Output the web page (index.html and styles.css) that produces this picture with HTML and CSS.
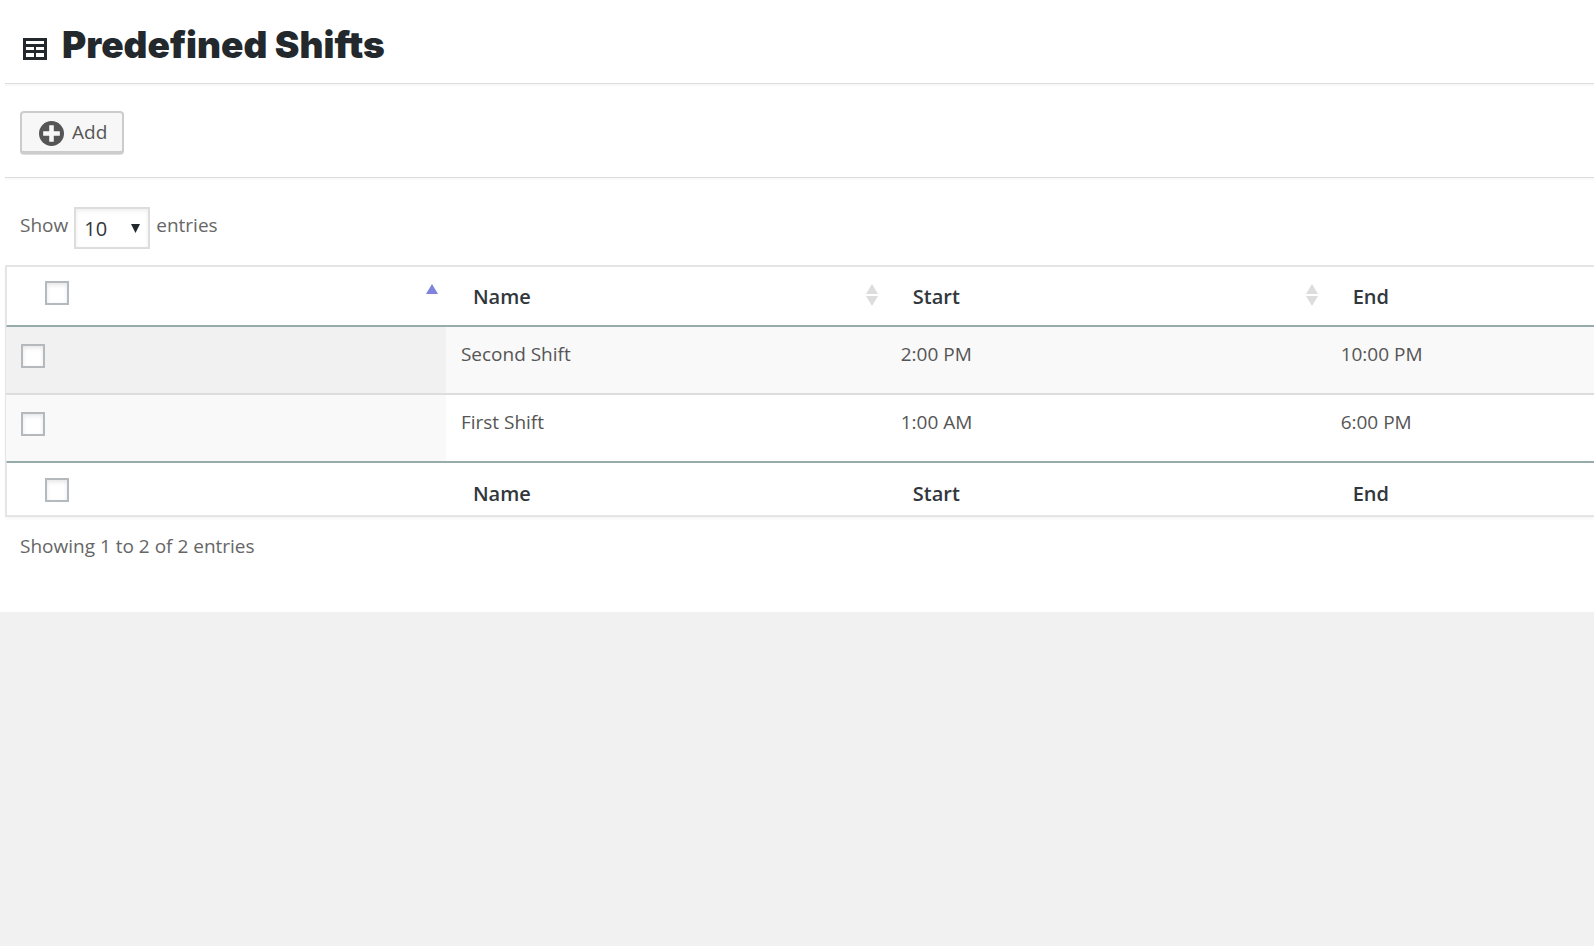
FILE: index.html
```html
<!DOCTYPE html>
<html lang="en">
<head>
<meta charset="utf-8">
<title>Predefined Shifts</title>
<link rel="stylesheet" href="styles.css">
</head>
<body>
<main class="panel">
  <header class="panel-header">
    <svg class="title-icon" viewBox="0 0 24 22" aria-hidden="true"><path fill="currentColor" fill-rule="evenodd" d="M0 0h24v22H0zM3 3v3h18V3zM3 9v3h8V9zM13 9v3h8V9zM3 15v4h8v-4zM13 15v4h8v-4z"/></svg>
    <h1 class="title">Predefined Shifts</h1>
  </header>
  <div class="toolbar">
    <button class="add-button" type="button">
      <svg class="add-icon" viewBox="0 0 24 24" aria-hidden="true"><circle cx="12" cy="12" r="12" fill="currentColor"/><path fill="#f7f7f7" d="M9.800 4h4.400v5.800H20v4.400h-5.800V20H9.800v-5.800H4V9.800h5.800z"/></svg>
      <span>Add</span>
    </button>
  </div>
  <div class="length">
    <label for="length">Show</label>
    <span class="select-wrap">
      <select class="select" id="length"><option>10</option><option>25</option><option>50</option></select>
      <svg class="select-arrow" viewBox="0 0 9 9" aria-hidden="true"><path fill="#23282d" d="M0 0h9L4.500 9z"/></svg>
    </span>
    <span>entries</span>
  </div>
  <div class="table-wrap">
    <table class="table">
      <colgroup><col class="col"><col class="col"><col class="col"><col></colgroup>
      <thead>
        <tr>
          <th><div class="head"><input class="check" type="checkbox" aria-label="Select all"><svg class="sort sort-active" viewBox="0 0 12 22" aria-hidden="true"><path d="M6 0l6 10H0z"/></svg></div></th>
          <th><div class="head"><button class="sort-button" type="button">Name</button><svg class="sort" viewBox="0 0 12 22" aria-hidden="true"><path d="M6 0l6 10H0zM0 12h12L6 22z"/></svg></div></th>
          <th><div class="head"><button class="sort-button" type="button">Start</button><svg class="sort" viewBox="0 0 12 22" aria-hidden="true"><path d="M6 0l6 10H0zM0 12h12L6 22z"/></svg></div></th>
          <th><div class="head"><button class="sort-button" type="button">End</button></div></th>
        </tr>
      </thead>
      <tbody>
        <tr><td><input class="check" type="checkbox" aria-label="Select Second Shift"></td><td>Second Shift</td><td>2:00 PM</td><td>10:00 PM</td></tr>
        <tr><td><input class="check" type="checkbox" aria-label="Select First Shift"></td><td>First Shift</td><td>1:00 AM</td><td>6:00 PM</td></tr>
      </tbody>
      <tfoot>
        <tr><th><input class="check" type="checkbox" aria-label="Select all"></th><th>Name</th><th>Start</th><th>End</th></tr>
      </tfoot>
    </table>
  </div>
  <p class="info">Showing 1 to 2 of 2 entries</p>
</main>
</body>
</html>
```
FILE: styles.css
```css
* { box-sizing: border-box; }

body {
  margin: 0;
  background: #f1f1f1;
  color: #666;
  font: 19px/26px "Open Sans", "Noto Sans", sans-serif;
}

button, select, input { font: inherit; color: inherit; margin: 0; }

.panel { background: #fff; padding: 0 0 53px 5px; }

.panel-header {
  display: flex;
  align-items: center;
  gap: 15px;
  padding: 21px 18px 14px;
  border-bottom: 1px solid #ddd;
  box-shadow: 0 2px 1px #f9f9f9;
  color: #23282d;
}

.title { margin: 0; font: 900 37px/48px Inter, sans-serif; font-variant-ligatures: none; }
.title-icon { width: 24px; height: 22px; margin-top: 8px; }

.toolbar {
  padding: 27px 15px 23px;
  border-bottom: 1px solid #ddd;
  box-shadow: 0 2px 1px #f9f9f9;
}

.add-button {
  display: flex;
  align-items: center;
  gap: 8px;
  height: 43px;
  padding: 0 15px 0 17px;
  border: 2px solid #ccc;
  border-bottom-width: 3px;
  border-radius: 4px;
  background: #f7f7f7;
  box-shadow: 0 1px 0 #ddd;
  color: #555;
}

.add-icon { width: 25px; height: 25px; margin-top: 3px; }

.length {
  display: flex;
  gap: 6px;
  padding: 29px 15px 16px;
  line-height: 36px;
}

.select-wrap { display: grid; align-items: center; width: 76px; }

.select {
  grid-area: 1 / 1;
  width: 100%;
  height: 42px;
  padding: 2px 8px 0;
  border: 2px solid #ddd;
  border-radius: 0;
  background: #fff;
  box-shadow: inset 0 2px 4px rgba(0, 0, 0, 0.07);
  color: #32373c;
  font-size: 20px;
  appearance: none;
}

.select-arrow {
  grid-area: 1 / 1;
  justify-self: end;
  width: 9px;
  height: 9px;
  margin-right: 10px;
  pointer-events: none;
}

.table-wrap {
  border: 2px solid #e5e5e5;
  border-width: 2px 0 2px 1px;
  box-shadow: 0 2px 2px rgba(0, 0, 0, 0.04);
}

.table {
  width: 100%;
  table-layout: fixed;
  border-collapse: separate;
  border-spacing: 0;
  text-align: left;
}

.col { width: 27.700%; }

th {
  padding: 14px 8px 8px 27px;
  color: #32373c;
  font-size: 20px;
  font-weight: 600;
  vertical-align: top;
}

th:first-child { border-left: 1px solid #e5e5e5; padding-left: 38px; }
thead th { height: 60px; border-bottom: 2px solid #96acaa; }
tfoot th { height: 54px; border-top: 2px solid #96acaa; padding-top: 18px; padding-bottom: 0; }
tfoot th:first-child { padding-top: 15px; }

.head { display: flex; justify-content: space-between; align-items: flex-start; }
.sort-button { padding: 3px 0 0; border: 0; background: none; font-weight: 600; }
.sort { width: 12px; height: 22px; margin-top: 3px; fill: #ddd; }
.sort-active { fill: #7f83df; }

td { height: 66px; padding: 14px 15px; color: #555; vertical-align: top; }
tbody tr:nth-child(odd) td { background: #f9f9f9; }
tbody tr td:first-child { padding-top: 17px; background: #f9f9f9; }
tbody tr:nth-child(odd) td:first-child { background: #f1f1f1; }
tbody tr + tr td { height: 68px; border-top: 2px solid #ddd; }

.check {
  display: block;
  width: 24px;
  height: 24px;
  border: 2px solid #b4b9be;
  background: #fff;
  box-shadow: inset 0 2px 4px rgba(0, 0, 0, 0.1);
  appearance: none;
}

.info { margin: 0; padding: 16px 15px 0; }
```
